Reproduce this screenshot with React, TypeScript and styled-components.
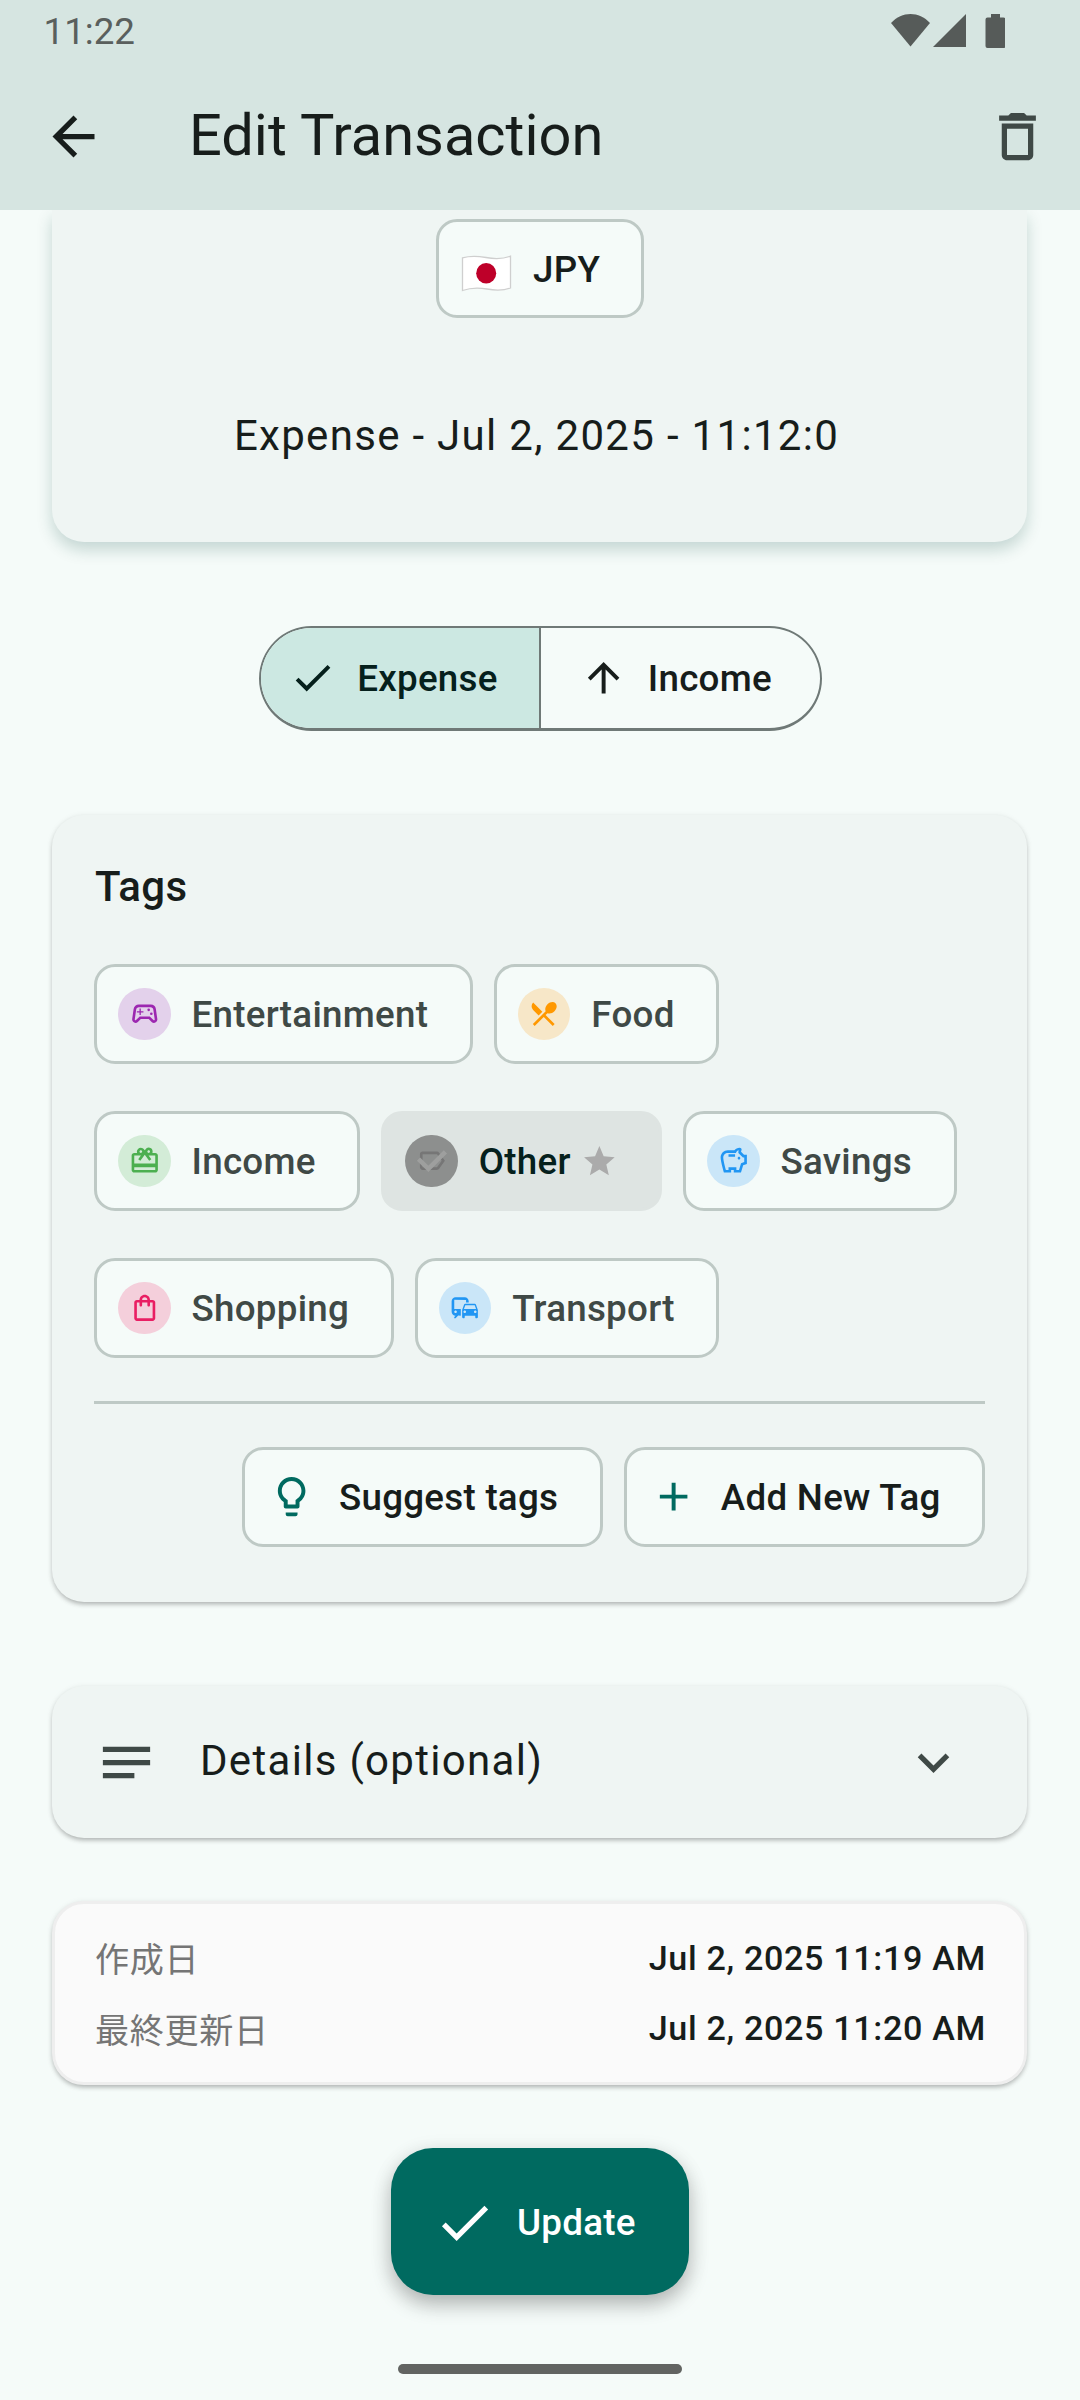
import React from "react";
import styled, { createGlobalStyle } from "styled-components";
import {
  MdAdd,
  MdArrowBack,
  MdArrowUpward,
  MdCheck,
  MdCommute,
  MdDeleteOutline,
  MdExpandMore,
  MdLabelOutline,
  MdLightbulbOutline,
  MdNotes,
  MdOutlineCardGiftcard,
  MdOutlineSavings,
  MdOutlineShoppingBag,
  MdOutlineSportsEsports,
  MdRestaurantMenu,
  MdStar,
} from "react-icons/md";

const color = {
  surface: "#f5fbf9",
  card: "#eff5f3",
  bar: "#d6e5e1",
  text: "#171d1b",
  muted: "#3f4946",
  outline: "#6f7977",
  outlineSoft: "#bec9c5",
  primary: "#006a60",
};

const GlobalStyle = createGlobalStyle`
  * { box-sizing: border-box; }
  body {
    margin: 0;
    background: ${color.surface};
    color: ${color.text};
    font-family: Roboto, "Noto Sans CJK JP", sans-serif;
  }
  svg { display: block; flex: none; }
`;

const Screen = styled.div`
  width: 1080px;
  height: 2400px;
  overflow: hidden;
  display: flex;
  flex-direction: column;
  background: ${color.surface};
`;

const Header = styled.header`
  position: relative;
  z-index: 1;
  flex: none;
  height: 210px;
  background: ${color.bar};
`;

const StatusBar = styled.div`
  height: 63px;
  padding: 0 75px 1px 43.5px;
  display: flex;
  align-items: center;
  justify-content: space-between;
  font-size: 36.75px;
  color: #5a5f5d;
`;

const StatusIcons = styled.svg`
  width: 114px;
  height: 34px;
  fill: #565b59;
`;

const AppBar = styled.div`
  height: 147px;
  padding: 0 31.5px 0 42px;
  display: flex;
  align-items: center;
`;

const Title = styled.h1`
  flex: 1;
  margin: 0 0 3px 84px;
  font-size: 57.75px;
  font-weight: 400;
  line-height: 68px;
`;

const TrashIcon = styled(MdDeleteOutline)`
  color: ${color.muted};
`;

const Content = styled.main`
  flex: 1;
  padding-right: 1px;
  display: flex;
  flex-direction: column;
  align-items: center;
`;

const AmountCard = styled.section`
  width: 975px;
  height: 332px;
  padding-top: 9px;
  display: flex;
  flex-direction: column;
  align-items: center;
  background: ${color.card};
  border-radius: 0 0 32px 32px;
  box-shadow: 0 8px 16px rgba(0, 70, 60, 0.2);
`;

const Card = styled.section`
  width: 975px;
  background: ${color.card};
  border-radius: 32px;
  box-shadow: 0 3px 5px -1px rgba(0, 0, 0, 0.26), 0 1px 6px rgba(0, 0, 0, 0.08);
`;

const Chip = styled.button<{ $selected?: boolean; $strong?: boolean }>`
  height: 100px;
  margin: 0;
  padding: 0 41.6px 0 21px;
  display: flex;
  align-items: center;
  gap: 21px;
  font: 500 36.75px Roboto, sans-serif;
  letter-spacing: 0.26px;
  white-space: nowrap;
  color: ${(p) => (p.$selected ? "#05201c" : p.$strong ? color.text : color.muted)};
  background: ${(p) => (p.$selected ? "#dee4e2" : color.surface)};
  border: 3px solid ${(p) => (p.$selected ? "#dee4e2" : color.outlineSoft)};
  border-radius: 21px;
`;

const CurrencyChip = styled(Chip)`
  width: 208px;
  height: 99px;
  margin-left: 1px;
  padding-top: 2px;
  padding-left: 22px;
`;

const Flag = styled.svg`
  width: 51px;
  height: 37px;
  margin-top: 7px;
`;

const DateLine = styled.div`
  margin: 93px 6px 0 0;
  font-size: 42px;
  line-height: 49px;
  letter-spacing: 1.31px;
`;

const Segmented = styled.div`
  width: 563px;
  height: 105px;
  margin: 84px 0 0 1px;
  display: flex;
  overflow: hidden;
  border: 2px solid ${color.outline};
  border-bottom-width: 3px;
  border-radius: 53px;
`;

const Segment = styled.button<{ $active?: boolean }>`
  flex: ${(p) => (p.$active ? "0 0 280px" : 1)};
  margin: 0;
  padding: 0 0 0 ${(p) => (p.$active ? 28.5 : 39)}px;
  display: flex;
  align-items: center;
  gap: 21px;
  font: 500 36.75px Roboto, sans-serif;
  letter-spacing: 0.26px;
  color: ${(p) => (p.$active ? "#05201c" : color.text)};
  background: ${(p) => (p.$active ? "#cce8e2" : "transparent")};
  border: 0;
  border-right: ${(p) => (p.$active ? `2px solid ${color.outline}` : "0")};
`;

const TagsCard = styled(Card)`
  height: 787px;
  margin-top: 84px;
  padding: 47px 42px 0;
`;

const SectionTitle = styled.h2`
  margin: 0 0 0 1px;
  font-size: 42px;
  font-weight: 500;
  line-height: 49px;
  letter-spacing: 0.39px;
`;

const TagList = styled.div`
  margin-top: 53px;
  display: flex;
  flex-wrap: wrap;
  gap: 47px 21px;
`;

const Avatar = styled.span<{ $fg: string; $bg: string }>`
  flex: none;
  width: 52.5px;
  height: 52.5px;
  display: grid;
  place-items: center;
  color: ${(p) => p.$fg};
  background: ${(p) => p.$bg};
  border-radius: 50%;

  > svg {
    grid-area: 1 / 1;
  }
`;

const SelectedMark = styled.svg`
  width: 36px;
  height: 30px;
  fill: none;
  stroke: #9e9f9e;
  stroke-width: 4.6;
`;

const Favorite = styled(MdStar)`
  margin-left: -11px;
  color: #ababab;
`;

const Divider = styled.hr`
  height: 3px;
  margin: 43px 0;
  border: 0;
  background: ${color.outlineSoft};
`;

const Actions = styled.div`
  display: flex;
  justify-content: flex-end;
  gap: 21px;
`;

const ActionChip = styled(Chip)`
  padding-left: 23px;
  padding-right: 41.4px;
  gap: 24px;

  > svg {
    color: ${color.primary};
  }
`;

const DetailsCard = styled(Card)`
  height: 152px;
  margin-top: 84px;
  padding: 1px 62px 0 42.5px;
  display: flex;
  align-items: center;
  color: ${color.muted};
`;

const DetailsLabel = styled.span`
  flex: 1;
  margin: 0 0 4px 42.5px;
  font-size: 42px;
  letter-spacing: 1.31px;
  color: ${color.text};
`;

const InfoCard = styled(Card)`
  height: 184px;
  margin-top: 63px;
  padding: 19px 38px 0 40px;
  background: #fafafa;
  border: 3px solid #eeeeee;
`;

const InfoRow = styled.div`
  height: 70px;
  display: flex;
  align-items: center;
  justify-content: space-between;
  font-size: 34.125px;
  letter-spacing: 0.66px;
`;

const InfoLabel = styled.span`
  margin-bottom: 2px;
  color: #757575;
  font-family: "Noto Sans CJK JP", sans-serif;
  line-height: 50px;
  font-weight: 400;

  ${InfoRow}:last-child > & {
    margin-bottom: 0;
  }
`;

const InfoValue = styled.span`
  font-weight: 500;
`;

const UpdateButton = styled.button`
  width: 298px;
  height: 147px;
  margin: 63px 0 0 1px;
  padding: 1px 0 0 42px;
  display: flex;
  align-items: center;
  gap: 21px;
  font: 500 36.75px Roboto, sans-serif;
  letter-spacing: 0.26px;
  color: #ffffff;
  background: ${color.primary};
  border: 0;
  border-radius: 42px;
  box-shadow: 0 10px 20px rgba(0, 0, 0, 0.24), 0 4px 22px rgba(0, 0, 0, 0.08);
`;

const NavHandle = styled.div`
  width: 284px;
  height: 10px;
  margin: 69px 0 0 1px;
  border-radius: 5px;
  background: #626462;
`;

type Tag = {
  name: string;
  fg: string;
  bg: string;
  icon: React.ReactNode;
  selected?: boolean;
};

const tags: Tag[] = [
  { name: "Entertainment", fg: "#9c27b0", bg: "#e3d1eb", icon: <MdOutlineSportsEsports size={31.5} /> },
  { name: "Food", fg: "#ff9800", bg: "#f7e7c8", icon: <MdRestaurantMenu size={31.5} /> },
  { name: "Income", fg: "#4caf50", bg: "#d3ecd7", icon: <MdOutlineCardGiftcard size={31.5} /> },
  { name: "Other", fg: "#767676", bg: "#8d8f8e", icon: <MdLabelOutline size={31.5} />, selected: true },
  { name: "Savings", fg: "#2196f3", bg: "#cae6f8", icon: <MdOutlineSavings size={31.5} /> },
  { name: "Shopping", fg: "#e91e63", bg: "#f4cfdb", icon: <MdOutlineShoppingBag size={31.5} /> },
  { name: "Transport", fg: "#2196f3", bg: "#cae6f8", icon: <MdCommute size={31.5} /> },
];

const TagChip = ({ tag }: { tag: Tag }) => (
  <Chip $selected={tag.selected}>
    <Avatar $fg={tag.fg} $bg={tag.bg}>
      {tag.icon}
      {tag.selected && (
        <SelectedMark viewBox="0 0 36 30">
          <path d="M4.5 13.2L14.400 22.800L31.400 5.800" />
        </SelectedMark>
      )}
    </Avatar>
    {tag.name}
    {tag.selected && <Favorite size={36.75} />}
  </Chip>
);

const JapanFlag = () => (
  <Flag viewBox="0 0 51 37">
    <path
      d="M1.500 2.800C9 .6 17 1 25 2.500S42 4 49.500 1.200V33C42 35.800 34 35.500 26 34S9 32.800 1.500 35.500Z"
      fill="#fff"
      stroke="#cfcfcf"
      strokeWidth="1.3"
    />
    <ellipse cx="25.200" cy="18.300" rx="10" ry="10.300" fill="#be0029" />
  </Flag>
);

export default function App() {
  return (
    <Screen>
      <GlobalStyle />
      <Header>
        <StatusBar>
          <span>11:22</span>
          <StatusIcons viewBox="0 0 114 34">
            <path d="M0 9C11 -3 28 -3 39 9L19.500 32.500Z" />
            <path d="M42 33L75 0V33Z" />
            <path d="M100 0h9v3.500h3.500q2 0 2 2V32q0 2-2 2h-16q-2 0-2-2V5.500q0-2 2-2H100Z" />
          </StatusIcons>
        </StatusBar>
        <AppBar>
          <MdArrowBack size={63} />
          <Title>Edit Transaction</Title>
          <TrashIcon size={63} />
        </AppBar>
      </Header>
      <Content>
        <AmountCard>
          <CurrencyChip $strong>
            <JapanFlag />
            JPY
          </CurrencyChip>
          <DateLine>Expense - Jul 2, 2025 - 11:12:0</DateLine>
        </AmountCard>
        <Segmented>
          <Segment $active>
            <MdCheck size={47.25} />
            Expense
          </Segment>
          <Segment>
            <MdArrowUpward size={47.25} />
            Income
          </Segment>
        </Segmented>
        <TagsCard>
          <SectionTitle>Tags</SectionTitle>
          <TagList>
            {tags.map((tag) => (
              <TagChip key={tag.name} tag={tag} />
            ))}
          </TagList>
          <Divider />
          <Actions>
            <ActionChip $strong>
              <MdLightbulbOutline size={47.25} />
              Suggest tags
            </ActionChip>
            <ActionChip $strong>
              <MdAdd size={47.25} />
              Add New Tag
            </ActionChip>
          </Actions>
        </TagsCard>
        <DetailsCard>
          <MdNotes size={63} />
          <DetailsLabel>Details (optional)</DetailsLabel>
          <MdExpandMore size={63} />
        </DetailsCard>
        <InfoCard>
          <InfoRow>
            <InfoLabel lang="ja">作成日</InfoLabel>
            <InfoValue>Jul 2, 2025 11:19 AM</InfoValue>
          </InfoRow>
          <InfoRow>
            <InfoLabel lang="ja">最終更新日</InfoLabel>
            <InfoValue>Jul 2, 2025 11:20 AM</InfoValue>
          </InfoRow>
        </InfoCard>
        <UpdateButton>
          <MdCheck size={63} />
          Update
        </UpdateButton>
        <NavHandle />
      </Content>
    </Screen>
  );
}
